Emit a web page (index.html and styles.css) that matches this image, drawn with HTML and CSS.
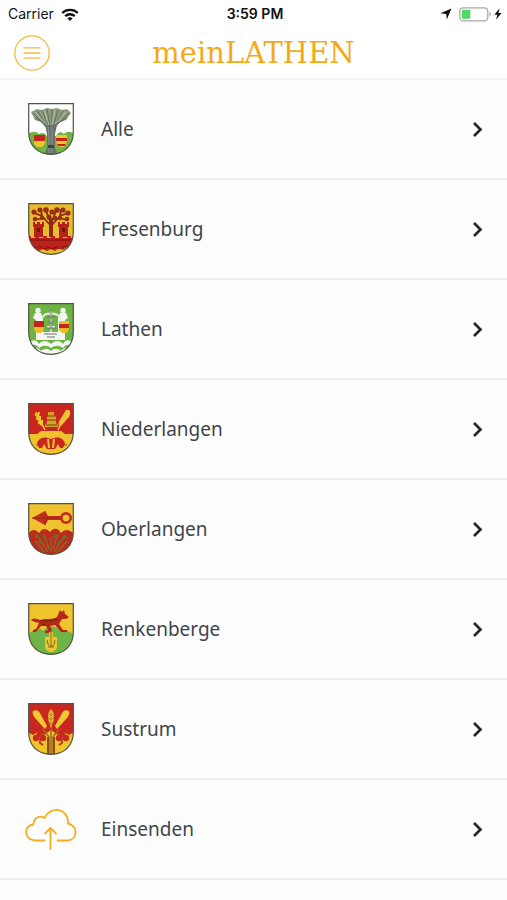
FILE: index.html
```html
<!DOCTYPE html>
<html lang="de">
<head>
<meta charset="utf-8">
<meta name="viewport" content="width=device-width, initial-scale=1">
<title>meinLATHEN</title>
<link rel="stylesheet" href="styles.css">
</head>
<body>
<svg class="defs" aria-hidden="true">
  <defs>
    <path id="shield" d="M.7.7h44.6V29C45.300 43 36 51.300 23 51.300S.7 43 .7 29Z"/>
    <clipPath id="shield-clip"><use href="#shield"/></clipPath>
    <path id="chevron" d="M2 2l6.500 6.500L2 15"/>
    <g id="ear">
      <path d="M0-9C3-6 3-3 2.500 2L0 10-2.500 2C-3-3-3-6 0-9Z"/>
    </g>
  </defs>
</svg>

<header class="top">
  <div class="status">
    <div class="status-left">
      <span>Carrier</span>
      <svg class="wifi" viewBox="0 0 18 13" aria-hidden="true">
        <g fill="none" stroke="#111" stroke-width="2.300">
          <path d="M1.200 5C5.500.8 12.500.8 16.800 5"/>
          <path d="M4.200 8.200c2.700-2.600 6.900-2.600 9.600 0"/>
        </g>
        <path d="M6.300 10.200c1.600-1.400 3.800-1.400 5.400 0L9 12.900Z" fill="#111"/>
      </svg>
    </div>
    <time class="clock">3:59 PM</time>
    <div class="status-right">
      <svg class="locator" viewBox="0 0 12 12" aria-hidden="true"><path d="M11.500.4 6.800 11.600 6.200 6 .4 5.300Z" fill="#111"/></svg>
      <svg class="battery" viewBox="0 0 33 15" aria-hidden="true">
        <rect x=".8" y=".8" width="28" height="13" rx="3.500" fill="#fff" stroke="#a9a9a9" stroke-width="1.300"/>
        <rect x="2.800" y="2.800" width="8.500" height="9" rx="1" fill="#4cd964"/>
        <path d="M30.500 5v4.600c1.900-.7 1.900-3.900 0-4.600Z" fill="#a9a9a9"/>
      </svg>
      <svg class="bolt" viewBox="0 0 8 12" aria-hidden="true"><path d="M5.600.2.400 6.800h3L2 11.800l5.600-6.900H4.500Z" fill="#111"/></svg>
    </div>
  </div>
  <div class="bar">
    <button class="menu" type="button" aria-label="Menü">
      <svg viewBox="0 0 36 36" aria-hidden="true">
        <circle cx="18" cy="18" r="17.200"/>
        <path d="M9.500 12.800h17M9.500 18h17M9.500 23.200h17"/>
      </svg>
    </button>
    <h1>meinLATHEN</h1>
  </div>
</header>

<main>
  <ul class="list">
    <li><a class="row" href="#alle">
      <svg class="crest" viewBox="0 0 46 52" aria-hidden="true">
        <g clip-path="url(#shield-clip)">
          <path fill="#fff" d="M0 0h46v52H0z"/>
          <path fill="#70b445" d="M0 31c4-3 8-3 11 0 3-2 6-1 8 2h9c2-4 5-5 8-2 3-3 7-3 10 0v21H0z"/>
          <path fill="#8c9b80" d="M3 9 9 6l5 1 5-2 5 1 5-1 5 2 5-1 4 4-5 7-6 2-4 5H17l-4-5-6-2Z"/>
          <path fill="none" stroke="#56674f" stroke-width=".8" d="M5 10l14 14M9 8l11 16M14 7l7 17M19 6l3 18M24 6v18M30 7l-5 17M35 8l-9 16M41 10 27 24M7 15l12 7M39 15l-12 7"/>
          <path fill="none" stroke="#d8dfcd" stroke-width=".6" d="M7 9l12 13M16 7l5 15M27 7l-3 15M38 9 27 21"/>
          <path fill="#68706a" d="M17 22h12l-2 9v14l3 7H16l3-7V31Z"/>
          <path fill="none" stroke="#9ba298" stroke-width=".8" d="M20 24l1 8v18M24 24v26"/>
          <path fill="#3e4642" d="M20 42h6v3h-6z"/>
          <path fill="#c5251d" d="M6 32h11v6H6zM28 32h11v9H28z"/>
          <path fill="#f1c52d" d="M6 38h11c0 4-2 6-5.500 6S6 42 6 38ZM28 32h11v3H28zM28 38h11c0 4-2 6-5.500 6S28 42 28 38Z"/>
          <path fill="#c5251d" d="M29 41h9l-1 2h-7z"/>
        </g>
        <use href="#shield" class="rim"/>
      </svg>
      <span class="label">Alle</span>
      <svg class="chevron" viewBox="0 0 11 17" aria-hidden="true"><use href="#chevron"/></svg>
    </a></li>
    <li><a class="row" href="#fresenburg">
      <svg class="crest" viewBox="0 0 46 52" aria-hidden="true">
        <g clip-path="url(#shield-clip)">
          <path fill="#e8bd2d" d="M0 0h46v52H0z"/>
          <g fill="none" stroke="#8e2814" stroke-width="1.800">
            <path stroke-width="4" d="M23 34V15"/>
            <path d="M23 23 14 13 6 10M23 21l-5-13M23 21l5-13M23 23l9-10 8-3M14 13l-1-6M32 13l1-6M15 15 7 17M31 15l8 2"/>
          </g>
          <g fill="#9b2c16">
            <circle cx="6" cy="9" r="2.600"/><circle cx="12" cy="7" r="2.600"/><circle cx="18" cy="7" r="2.800"/><circle cx="24" cy="9" r="2.600"/><circle cx="29" cy="7" r="2.800"/><circle cx="35" cy="7" r="2.600"/><circle cx="40" cy="10" r="2.600"/><circle cx="7" cy="16" r="2.300"/><circle cx="14" cy="15" r="2.300"/><circle cx="32" cy="15" r="2.300"/><circle cx="39" cy="16" r="2.300"/><circle cx="21" cy="14" r="2.500"/><circle cx="27" cy="15" r="2.300"/>
          </g>
          <path fill="#b52219" d="M5 19h2v2h2v-2h3v2h2v-2h2v5h-1v10H6V24H5ZM30 19h2v2h2v-2h3v2h2v-2h2v5h-1v10h-9V24h-1Z"/>
          <path fill="#6e1710" d="M9 25h3v4H9zM34 25h3v4h-3z"/>
          <path fill="#bd211a" d="M0 33h3v2h4v-2h4v2h4v-2h4v2h4v-2h4v2h4v-2h4v2h4v-2h4v2h3v9l-3 2-4-2-4 3-4-2-4 3-4-2-4 2-4-2-4 2-4-3-4 2-4-3Z"/>
          <path fill="none" stroke="#77140f" stroke-width="1" d="M1 37h44M4 42l4 3 4-2 4 3 4-2 4 2 4-2 4 2 4-3 4 1 3-2"/>
        </g>
        <use href="#shield" class="rim"/>
      </svg>
      <span class="label">Fresenburg</span>
      <svg class="chevron" viewBox="0 0 11 17" aria-hidden="true"><use href="#chevron"/></svg>
    </a></li>
    <li><a class="row" href="#lathen">
      <svg class="crest" viewBox="0 0 46 52" aria-hidden="true">
        <g clip-path="url(#shield-clip)">
          <path fill="#6db443" d="M0 0h46v52H0z"/>
          <g fill="#f4f6f3">
            <circle cx="10" cy="7.500" r="2.700"/><circle cx="35" cy="7.500" r="2.700"/>
            <path d="M7 10h6l2 5v22H8V17l-3-2ZM32 10h6l2 5-3 2v20h-7V15Z"/>
            <path d="M13 29h19v8H13z"/>
            <path d="M0 42c4-6 8-6 11-1 3-4 8-4 12 0 4-4 9-4 12 0 3-5 7-5 11 1v2c-4-3-8-3-11 1-4-3-8-3-12 0-4-3-8-3-12 0-3-4-7-4-11-1Z"/>
            <path d="M5 46c3-2 6-1 8 2 4-3 7-3 10 0 3-3 7-3 10 0 2-3 5-4 8-2v6H5Z"/>
          </g>
          <path fill="none" stroke="#e5eadf" stroke-width="1.800" d="M14 15c2-6 16-6 18 0M23 8v21M19 24h8"/>
          <path fill="none" stroke="#69756a" stroke-width="1" d="M23 6v21M19 14l8 0M20 18l3 3 3-3M18 25h10M16 31h13M19 34h8"/>
          <path fill="#c6251d" d="M6 18h10v6H6zM31 18h10v9H31z"/>
          <path fill="#efbd2b" d="M6 24h10c0 4-2 6-5 6s-5-2-5-6ZM31 18h10v3H31zM31 25h10c0 3-2 5-5 5s-5-2-5-5Z"/>
        </g>
        <use href="#shield" class="rim"/>
      </svg>
      <span class="label">Lathen</span>
      <svg class="chevron" viewBox="0 0 11 17" aria-hidden="true"><use href="#chevron"/></svg>
    </a></li>
    <li><a class="row" href="#niederlangen">
      <svg class="crest" viewBox="0 0 46 52" aria-hidden="true">
        <g clip-path="url(#shield-clip)">
          <path fill="#c92620" d="M0 0h46v52H0z"/>
          <path fill="#efc22f" d="M0 31h9l4-3h20l4 3h9v21H0z"/>
          <g stroke="#f0c331" fill="none">
            <path stroke-width="1.500" d="M8 9l9 18M38 9 30 27"/>
            <path stroke-width="2" d="M7 11l3 3 1-5M8 15l4 3V13M10 19l4 3v-5"/>
          </g>
          <path fill="#f0c331" d="M38 7c5-1 5 4 3 7l-8 9c-3 0-3-3-1-6Z"/>
          <path fill="#d7a326" d="M20 9h6v3l2 2v6l2 2v2H17v-2l2-2v-6l1-2Z"/>
          <path fill="none" stroke="#784015" stroke-width="1" d="M19 13h9M19 17h9M18 22h11M21 25h4"/>
          <path fill="#c92620" d="M9 40c3-7 9-6 14-4 5-2 11-3 14 4l-2 5h-3l-2-4-3 5h-8l-3-5-2 4h-3Z"/>
          <path fill="none" stroke="#efc22f" stroke-width="2" d="M20 36l1 9M26 36l-1 9"/>
          <path fill="none" stroke="#a92c16" d="M8 42h5M34 42h5"/>
        </g>
        <use href="#shield" class="rim"/>
      </svg>
      <span class="label">Niederlangen</span>
      <svg class="chevron" viewBox="0 0 11 17" aria-hidden="true"><use href="#chevron"/></svg>
    </a></li>
    <li><a class="row" href="#oberlangen">
      <svg class="crest" viewBox="0 0 46 52" aria-hidden="true">
        <g clip-path="url(#shield-clip)">
          <path fill="#f0c22d" d="M0 0h46v52H0z"/>
          <path fill="#c32d1d" d="M4 15 17 8l3 5h13v4H20l-3 5Z"/>
          <path fill="none" stroke="#8e2317" stroke-width=".8" d="M4 15h28M17 8l2 7-2 7"/>
          <circle cx="38" cy="15" r="4.700" fill="none" stroke="#c32d1d" stroke-width="2.700"/>
          <path fill="#bd2b1d" d="M0 31c4-5 7-5 11-1 3-5 7-5 11-1 4-5 8-4 11 1 4-4 8-4 13 1v21H0z"/>
          <g fill="none" stroke="#8b6429" stroke-width="1.400">
            <path d="M23 49V34M20 49 9 32M26 49l11-17M17 50 7 38M29 50l10-12M21 46l-5-15M25 46l5-15"/>
          </g>
          <g fill="#686f2d">
            <circle cx="9" cy="33" r="1.900"/><circle cx="16" cy="34" r="1.700"/><circle cx="27" cy="33" r="2"/><circle cx="37" cy="34" r="2"/><circle cx="31" cy="39" r="1.500"/><circle cx="12" cy="39" r="1.600"/>
          </g>
        </g>
        <use href="#shield" class="rim"/>
      </svg>
      <span class="label">Oberlangen</span>
      <svg class="chevron" viewBox="0 0 11 17" aria-hidden="true"><use href="#chevron"/></svg>
    </a></li>
    <li><a class="row" href="#renkenberge">
      <svg class="crest" viewBox="0 0 46 52" aria-hidden="true">
        <g clip-path="url(#shield-clip)">
          <path fill="#f0c42c" d="M0 0h46v52H0z"/>
          <path fill="#6eb446" d="M0 31l6-4c3-2 6-2 9 1 4-6 13-6 17 0 4-2 8-1 14 4v20H0z"/>
          <path fill="#b32a1a" d="M3 17c4-3 6-1 9 0 6-2 12 0 17-3l3-7 2 2 2-2 1 4 4 3-3 2-4 0-3 5 4 6h4v2h-6l-6-7-5 1 2 4-3 3-4 0v-2l3-1-2-4-5 0-5 6H5v-2l3-1 3-6c-3-1-5-1-8-3Z"/>
          <path fill="none" stroke="#6b1e12" stroke-width=".8" d="M12 18c6 0 12 0 18-2M14 21l4 1"/>
          <path fill="#edc62f" d="M17 34h12v9c0 4-3 6-6 6s-6-2-6-6ZM21 29h4v5h-4z"/>
          <path fill="none" stroke="#796d25" stroke-width="1" d="M23 28v15M19 37l1 4c1 3 5 3 6 0l1-4M20 44h6"/>
        </g>
        <use href="#shield" class="rim"/>
      </svg>
      <span class="label">Renkenberge</span>
      <svg class="chevron" viewBox="0 0 11 17" aria-hidden="true"><use href="#chevron"/></svg>
    </a></li>
    <li><a class="row" href="#sustrum">
      <svg class="crest" viewBox="0 0 46 52" aria-hidden="true">
        <g clip-path="url(#shield-clip)">
          <path fill="#c92720" d="M0 0h46v52H0z"/>
          <path fill="#f0c42c" d="M0 29l5 3 5-3 6 3 7-5 7 5 6-3 5 3 5-3v23H0z"/>
          <g fill="none" stroke="#9e6b20" stroke-width="1.500">
            <path d="M21 51V34l-6-8M25 51V34l6-8M23 51V22"/>
          </g>
          <g fill="#f1c832">
            <path d="M5 8c4-2 6 0 8 4l6 11-2 3L7 15C5 12 4 10 5 8ZM41 8c-4-2-6 0-8 4l-6 11 2 3 10-11c2-3 3-5 2-7Z"/>
            <use href="#ear" x="23" y="15"/>
          </g>
          <path fill="none" stroke="#a88522" stroke-width=".9" d="M23 6v17M20 10l3 3 3-3M20 14l3 3 3-3M20 18l3 3 3-3"/>
          <g fill="#c92a20">
            <circle cx="8" cy="35" r="3.200"/><circle cx="15" cy="35" r="3.200"/><circle cx="11.500" cy="31.500" r="3"/>
            <circle cx="31" cy="35" r="3.200"/><circle cx="38" cy="35" r="3.200"/><circle cx="34.500" cy="31.500" r="3"/>
          </g>
          <path fill="none" stroke="#b32a1a" stroke-width="1.600" d="M12 35v5l3 2M34 35v5l-3 2"/>
          <path fill="none" stroke="#8a421c" stroke-width="1.800" d="M20 51V34M26 51V34"/>
        </g>
        <use href="#shield" class="rim"/>
      </svg>
      <span class="label">Sustrum</span>
      <svg class="chevron" viewBox="0 0 11 17" aria-hidden="true"><use href="#chevron"/></svg>
    </a></li>
    <li><a class="row" href="#einsenden">
      <svg class="cloud" viewBox="0 0 52 42" aria-hidden="true">
        <path d="M20 32.500H10C-1 31.500-1 17 9 16.500 9 9.500 15.500 7 20 10 26-2.500 44-.5 43.500 15.500 54 18 53.500 32 43 32.500H33"/>
        <path d="M26 41V20M20.500 25.500 26 20l5.500 5.500"/>
      </svg>
      <span class="label">Einsenden</span>
      <svg class="chevron" viewBox="0 0 11 17" aria-hidden="true"><use href="#chevron"/></svg>
    </a></li>
  </ul>
</main>
</body>
</html>
```
FILE: styles.css
```css
* {
  box-sizing: border-box;
}

body {
  margin: 0;
  background: #fdfdfd;
  color: #3f454b;
  font-family: "Noto Sans", sans-serif;
}

.defs {
  position: absolute;
  width: 0;
  height: 0;
}

.top {
  background: #fff;
  border-bottom: 2px solid #f5f5f5;
}

.status {
  display: grid;
  grid-template-columns: 1fr auto 1fr;
  align-items: center;
  height: 28px;
  padding: 0 5px 0 8px;
  color: #111;
  font: 14px/20px Inter, sans-serif;
}

.status-left,
.status-right {
  display: flex;
  align-items: center;
  gap: 7px;
}

.status-right {
  justify-content: flex-end;
}

.clock {
  font-weight: 600;
}

.wifi {
  width: 18px;
  height: 13px;
}

.locator {
  width: 12px;
  height: 12px;
}

.battery {
  width: 33px;
  height: 15px;
}

.bolt {
  width: 8px;
  height: 12px;
  margin-left: -5px;
}

.bar {
  display: grid;
  grid-template-columns: 36px 1fr 36px;
  align-items: center;
  height: 50px;
  padding: 0 14px;
}

.menu {
  width: 36px;
  height: 36px;
  padding: 0;
  border: 0;
  background: none;
}

.menu svg {
  display: block;
  fill: none;
  stroke: #f7b747;
  stroke-width: 1.3;
}

h1 {
  margin: 0;
  color: #f6a916;
  font: 29px/36px "DejaVu Serif", serif;
  text-align: center;
}

.list {
  margin: 0;
  padding: 0;
  list-style: none;
}

.row {
  display: flex;
  align-items: center;
  gap: 24px;
  height: 100px;
  padding: 0 24px;
  border-bottom: 2px solid #efefef;
  color: inherit;
  text-decoration: none;
}

.crest {
  width: 46px;
  height: 52px;
  margin: 0 3px 0 4px;
}

.rim {
  fill: none;
  stroke: #4f5146;
  stroke-width: 1.2;
}

.cloud {
  width: 53px;
  height: 42px;
  fill: none;
  stroke: #f6ab20;
  stroke-width: 1.8;
  stroke-linecap: round;
  stroke-linejoin: round;
}

.label {
  flex: 1;
  font-size: 19px;
  line-height: 28px;
}

.chevron {
  width: 11px;
  height: 17px;
  fill: none;
  stroke: #25282c;
  stroke-width: 2.7;
}
```
